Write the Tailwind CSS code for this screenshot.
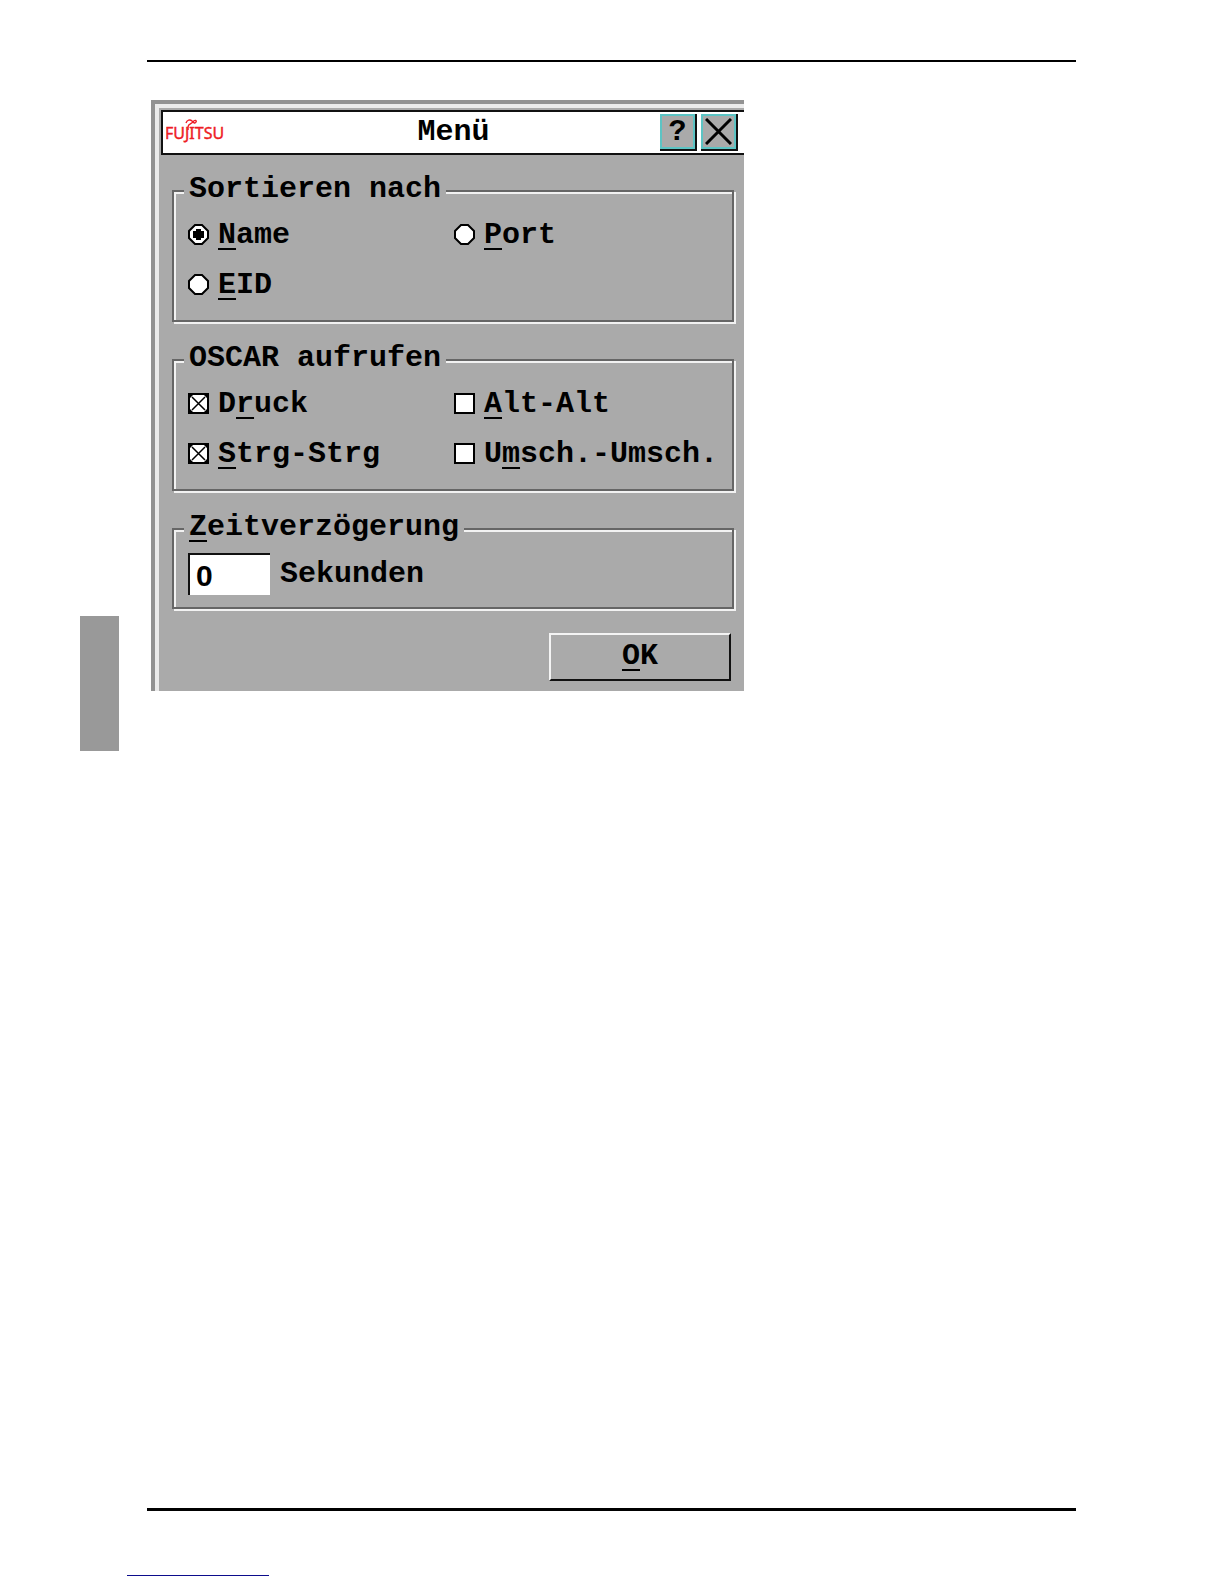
<!DOCTYPE html>
<html lang="de">
  <head>
    <meta charset="UTF-8" />
    <meta name="viewport" content="width=device-width, initial-scale=1.0" />
    <title>Menü</title>
    <script src="https://cdn.jsdelivr.net/npm/@tailwindcss/browser@4"></script>
  </head>
  <body class="bg-white">
    <div class="min-h-screen flex flex-col">
      <!-- Header rule -->
      <div class="mt-[60px] ml-[147px] mr-[148px] h-[2px] bg-black"></div>

      <div class="flex items-start pl-20 mt-[38px]">
        <!-- Chapter tab -->
        <div class="mt-[516px] w-[39px] h-[135px] shrink-0 bg-[#999999]"></div>

        <!-- Dialog -->
        <main
          class="ml-8 w-full max-w-[593px] border-t-4 border-l-4 border-[#929292] text-black font-bold text-[30px] leading-[34px] font-['Liberation_Mono',monospace]"
        >
          <div class="border-t-4 border-l-4 border-[#ebebeb] bg-[#aaaaaa] pt-[2px] pl-[2px]">
            <!-- Title bar -->
            <header
              class="grid grid-cols-[1fr_auto_1fr] items-center h-[45px] bg-white border-y-2 border-l-2 border-[#111111]"
            >
              <svg
                class="ml-[3px] w-[68px] h-[32px]"
                viewBox="0 0 68 32"
                fill="#ee1c25"
                role="img"
                aria-label="Fujitsu"
              >
                <text
                  x="-1"
                  y="22"
                  font-family="'Noto Sans', sans-serif"
                  font-size="16"
                  font-weight="400"
                  stroke="#ee1c25"
                  stroke-width="0.4"
                >FUJITSU</text>
                <path
                  d="M22 13 V10 C22 7 25 7 27 5 C29 2 31 4 30 5 C29 7 28 6 26 4 C24 2 21 3 20 6"
                  fill="none"
                  stroke="#ee1c25"
                  stroke-width="1.4"
                />
              </svg>
              <h1 class="pb-[2px]">Menü</h1>
              <div class="flex justify-end gap-[6px] pr-2 pb-[2px]">
                <button
                  type="button"
                  class="flex items-center justify-center size-[35px] bg-[#aaaaaa] border-2 border-[#5cc4c4] shadow-[1px_1px_0_1px_#111111]"
                >
                  ?
                </button>
                <button
                  type="button"
                  aria-label="Schließen"
                  class="flex items-center justify-center size-[35px] bg-[#aaaaaa] border-2 border-[#5cc4c4] shadow-[1px_1px_0_1px_#111111]"
                >
                  <svg class="size-[27px]" viewBox="0 0 27 27" fill="none" stroke="#000" stroke-width="3">
                    <path d="M1 1 L26 26 M26 1 L1 26" />
                  </svg>
                </button>
              </div>
            </header>

            <form class="flex flex-col gap-[19px] pt-[17px] pr-[10px] pb-[10px] pl-[11px]">
              <!-- Sort order -->
              <fieldset
                class="border-2 border-[#666666] shadow-[2px_2px_0_#f2f2f2,inset_2px_2px_0_#f2f2f2] px-[10px] pt-px pb-[9px]"
              >
                <legend class="bg-[#aaaaaa] px-[5px] pb-1">Sortieren nach</legend>
                <div class="grid grid-cols-[266fr_268fr] pl-1">
                  <label class="flex items-center gap-[9px] h-[50px] pb-[2px]">
                    <span class="grid mb-[2px]">
                      <input type="radio" name="sort" checked class="peer appearance-none size-[21px] col-start-1 row-start-1" />
                      <svg class="size-[21px] col-start-1 row-start-1 pointer-events-none" viewBox="0 0 21 21">
                        <path d="M7 1 H14 L20 7 V14 L14 20 H7 L1 14 V7 Z" fill="#fff" stroke="#000" stroke-width="2" />
                        <path d="M8 5 H13 V7 H16 V14 H13 V16 H8 V14 H5 V7 H8 Z" />
                      </svg>
                    </span>
                    <span><u class="decoration-2 underline-offset-[5px]">N</u>ame</span>
                  </label>
                  <label class="flex items-center gap-[9px] h-[50px] pb-[2px]">
                    <span class="grid mb-[2px]">
                      <input type="radio" name="sort" class="appearance-none size-[21px] col-start-1 row-start-1" />
                      <svg class="size-[21px] col-start-1 row-start-1 pointer-events-none" viewBox="0 0 21 21">
                        <path d="M7 1 H14 L20 7 V14 L14 20 H7 L1 14 V7 Z" fill="#fff" stroke="#000" stroke-width="2" />
                      </svg>
                    </span>
                    <span><u class="decoration-2 underline-offset-[5px]">P</u>ort</span>
                  </label>
                  <label class="flex items-center gap-[9px] h-[50px] pb-[2px]">
                    <span class="grid mb-[2px]">
                      <input type="radio" name="sort" class="appearance-none size-[21px] col-start-1 row-start-1" />
                      <svg class="size-[21px] col-start-1 row-start-1 pointer-events-none" viewBox="0 0 21 21">
                        <path d="M7 1 H14 L20 7 V14 L14 20 H7 L1 14 V7 Z" fill="#fff" stroke="#000" stroke-width="2" />
                      </svg>
                    </span>
                    <span><u class="decoration-2 underline-offset-[5px]">E</u>ID</span>
                  </label>
                </div>
              </fieldset>

              <!-- Hotkeys -->
              <fieldset
                class="border-2 border-[#666666] shadow-[2px_2px_0_#f2f2f2,inset_2px_2px_0_#f2f2f2] px-[10px] pt-px pb-[9px]"
              >
                <legend class="bg-[#aaaaaa] px-[5px] pb-1">OSCAR aufrufen</legend>
                <div class="grid grid-cols-[266fr_268fr] pl-1">
                  <label class="flex items-center gap-[9px] h-[50px] pb-[2px]">
                    <span class="grid mb-[2px]">
                      <input type="checkbox" checked class="peer appearance-none size-[21px] border-2 border-black bg-white col-start-1 row-start-1" />
                      <svg class="hidden peer-checked:block size-[21px] col-start-1 row-start-1 pointer-events-none" viewBox="0 0 21 21">
                        <path d="M4 4 L17 17 M17 4 L4 17" stroke="#000" stroke-width="1.5" />
                        <path d="M2 2 H5 L2 5 Z M19 2 V5 L16 2 Z M19 19 H16 L19 16 Z M2 19 V16 L5 19 Z" />
                      </svg>
                    </span>
                    <span>D<u class="decoration-2 underline-offset-[5px]">r</u>uck</span>
                  </label>
                  <label class="flex items-center gap-[9px] h-[50px] pb-[2px]">
                    <input type="checkbox" class="appearance-none size-[21px] mb-[2px] border-2 border-black bg-white" />
                    <span><u class="decoration-2 underline-offset-[5px]">A</u>lt-Alt</span>
                  </label>
                  <label class="flex items-center gap-[9px] h-[50px] pb-[2px]">
                    <span class="grid mb-[2px]">
                      <input type="checkbox" checked class="peer appearance-none size-[21px] border-2 border-black bg-white col-start-1 row-start-1" />
                      <svg class="hidden peer-checked:block size-[21px] col-start-1 row-start-1 pointer-events-none" viewBox="0 0 21 21">
                        <path d="M4 4 L17 17 M17 4 L4 17" stroke="#000" stroke-width="1.5" />
                        <path d="M2 2 H5 L2 5 Z M19 2 V5 L16 2 Z M19 19 H16 L19 16 Z M2 19 V16 L5 19 Z" />
                      </svg>
                    </span>
                    <span><u class="decoration-2 underline-offset-[5px]">S</u>trg-Strg</span>
                  </label>
                  <label class="flex items-center gap-[9px] h-[50px] pb-[2px]">
                    <input type="checkbox" class="appearance-none size-[21px] mb-[2px] border-2 border-black bg-white" />
                    <span>U<u class="decoration-2 underline-offset-[5px]">m</u>sch.-Umsch.</span>
                  </label>
                </div>
              </fieldset>

              <!-- Delay -->
              <fieldset
                class="border-2 border-[#666666] shadow-[2px_2px_0_#f2f2f2,inset_2px_2px_0_#f2f2f2] px-[10px] pt-[5px] pb-3"
              >
                <legend class="bg-[#aaaaaa] px-[5px] pb-1">
                  <u class="decoration-2 underline-offset-[5px]">Z</u>eitverzögerung
                </legend>
                <div class="flex items-start gap-[10px] pl-1">
                  <input
                    id="delay"
                    type="text"
                    value="0"
                    class="w-[82px] h-[42px] pl-[6px] pt-[2px] bg-white border-t-2 border-l-2 border-[#111111] font-['Liberation_Sans',sans-serif]"
                  />
                  <label for="delay" class="pt-1">Sekunden</label>
                </div>
              </fieldset>

              <button
                type="submit"
                class="self-end mt-[5px] mr-[3px] pb-[2px] w-[182px] h-12 border-2 border-t-[#f4f4f4] border-l-[#f4f4f4] border-r-[#111111] border-b-[#111111]"
              >
                <u class="decoration-2 underline-offset-[5px]">O</u>K
              </button>
            </form>
          </div>
        </main>
      </div>

      <!-- Footer rules -->
      <footer class="mt-auto pb-2">
        <div class="ml-[147px] mr-[148px] h-[3px] bg-black"></div>
        <div class="mt-16 ml-[127px] w-[142px] h-px bg-[#0c0c8c]"></div>
      </footer>
    </div>
  </body>
</html>
